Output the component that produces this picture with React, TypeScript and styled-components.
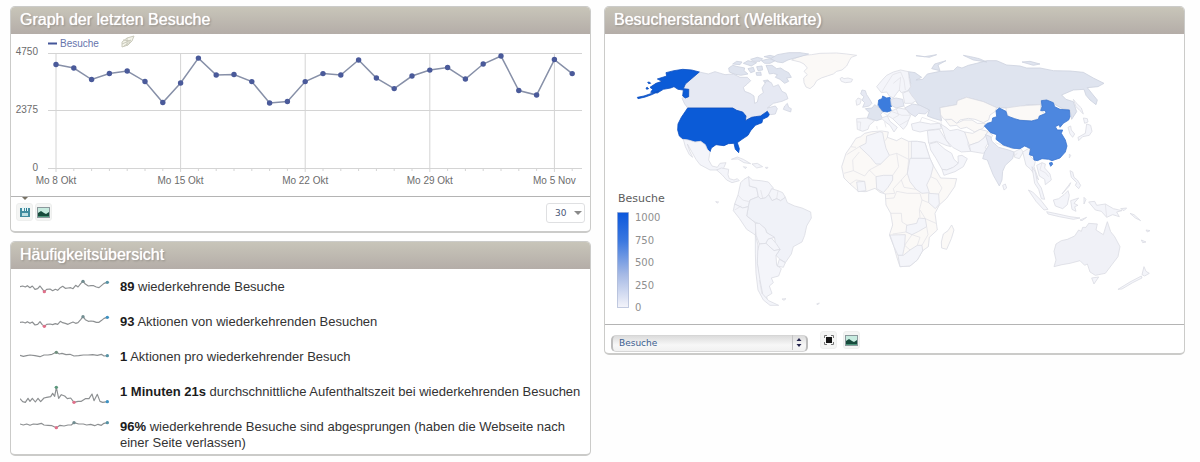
import React from "react";
import styled, { createGlobalStyle } from "styled-components";

const GlobalStyle = createGlobalStyle`
  *, *::before, *::after { box-sizing: border-box; }
  body {
    margin: 0;
    background: #fefefe;
    color: #333;
    font-family: "Liberation Sans", Arial, sans-serif;
    font-size: 13px;
    line-height: 16px;
  }
`;

const Dashboard = styled.main`
  display: grid;
  grid-template-columns: minmax(0, 1fr) minmax(0, 1fr);
  gap: 13px;
  align-items: start;
  padding: 6px 15px 8px 10px;
`;

const Column = styled.div`
  display: flex;
  flex-direction: column;
  gap: 8px;
`;

const Panel = styled.section`
  overflow: hidden;
  background: #fff;
  border: 1px solid #cbcbc9;
  border-bottom-width: 2px;
  border-radius: 5px;
`;

const PanelTitle = styled.h2`
  margin: 0;
  padding: 0 9px 2px;
  font-size: 16px;
  font-weight: 400;
  line-height: 25px;
  color: #fff;
  text-shadow: 0 0 1px #fff, 1px 1px 2px #88837b;
  background: linear-gradient(#c8c5b9, #b4ada8);
`;

const Drawing = styled.svg`
  display: block;
  width: 100%;
  height: auto;
`;

const PanelFooter = styled.footer<{ $compact?: boolean }>`
  position: relative;
  display: flex;
  align-items: flex-start;
  gap: ${(p) => (p.$compact ? "6px" : "2px")};
  padding: ${(p) => (p.$compact ? "6px 6px 2px" : "6px 5px 8px")};
  border-top: 1px solid #b4b4b4;
`;

const TabMark = styled.span`
  position: absolute;
  top: 0;
  left: 11px;
  border: 3px solid transparent;
  border-top-color: #777163;
  border-bottom: 0;
`;

const IconButton = styled.button`
  display: flex;
  align-items: center;
  justify-content: center;
  width: 17px;
  height: 18px;
  padding: 0;
  background: #f4f5f4;
  border: 1px solid #eeefee;
  border-radius: 3px;
`;

const LimitBox = styled.label`
  position: relative;
  display: block;
  width: 39px;
  height: 20px;
  margin-left: auto;
`;

const MetricBox = styled.label`
  position: relative;
  display: block;
  width: 197px;
  max-width: 60%;
  height: 17px;
  margin: 3px 6px 0 0;
`;

const LimitSelect = styled.select`
  appearance: none;
  width: 100%;
  height: 100%;
  padding: 0 8px;
  font-family: "DejaVu Sans", Verdana, sans-serif;
  font-size: 9px;
  color: #4b5878;
  background: #fff;
  border: 1px solid #dfe0e2;
  border-radius: 3px;
`;

const MetricSelect = styled.select`
  appearance: none;
  width: 100%;
  height: 100%;
  padding: 0 6px;
  font-family: "DejaVu Sans", Verdana, sans-serif;
  font-size: 9px;
  color: #3c6090;
  background: linear-gradient(#dcdcdc, #f7f7f7 60%, #f1f1f1);
  border: 1px solid #d6d6d6;
  border-width: 1px 2px;
  border-left-color: #bcbcbc;
  border-right-color: #bcbcbc;
  border-radius: 5px;
`;

const SelectMark = styled.svg`
  position: absolute;
  top: 0;
  right: 2px;
  height: 100%;
  pointer-events: none;
`;

const MetricList = styled.ul`
  margin: 0;
  padding: 10px 9px 0;
  list-style: none;
`;

const MetricRow = styled.li`
  display: flex;
  gap: 10px;
  min-height: 35px;
`;

const Sparkline = styled.svg`
  flex: none;
  width: 90px;
  height: 20px;
`;

const MetricText = styled.p`
  margin: 0;

  strong { color: #1c1c1c; }
`;

const VISITS = [
  4295, 4150, 3675, 3925, 4025, 3595, 2725, 3530, 4560, 3860, 3880, 3590, 2705, 2765, 3590,
  3920, 3860, 4480, 3735, 3300, 3820, 4065, 4170, 3695, 4315, 4645, 3220, 3035, 4500, 3920,
];
const WEEKS = ["Mo 8 Okt", "Mo 15 Okt", "Mo 22 Okt", "Mo 29 Okt", "Mo 5 Nov"];
const px = (day: number) => 45 + day * 17.8;
const py = (visits: number) => 134.5 - (visits / 4750) * 115;

function VisitsChart() {
  return (
    <Drawing viewBox="0 0 579 162" role="img" aria-label="Besuche pro Tag">
      <g fontFamily='"Liberation Sans", Arial, sans-serif' fontSize="10" fill="#6c6c6c">
        <path d="M37 9.500h9" stroke="#44569a" strokeWidth="2" />
        <text x="49" y="13" fill="#6674ac">Besuche</text>
        <path d="M111 8l5-4 7-2-2 5-4 4-6 2zM112 6l8 1M111 10l9-4M113 12l6-4M116 4v8" stroke="#cacabc" fill="#f4f4ea" />
        <text x="27" y="21" textAnchor="end">4750</text>
        <text x="27" y="79" textAnchor="end">2375</text>
        <text x="27" y="137" textAnchor="end">0</text>
        {WEEKS.map((w, i) => (
          <text key={w} x={px(i * 7)} y="150" textAnchor="middle">{w}</text>
        ))}
      </g>
      <g stroke="#d4d4d4" fill="none">
        <path d="M37 19.500H571M37 76.500H571M37 134.500H571" />
        {VISITS.map((_, i) => (
          <path key={i} d={i % 7 === 0 ? `M${px(i)} 19V138` : `M${px(i)} 134v3`} />
        ))}
      </g>
      <polyline points={VISITS.map((v, i) => `${px(i)},${py(v)}`).join(" ")} fill="none" stroke="#8790a8" strokeWidth="1.500" />
      {VISITS.map((v, i) => (
        <circle key={i} cx={px(i)} cy={py(v)} r="2.700" fill="#4a5a9a" />
      ))}
    </Drawing>
  );
}

type Dot = [number, number, string];
type Metric = { value: string; text: string; line: string; dots: Dot[] };

const METRICS: Metric[] = [
  {
    value: "89",
    text: "wiederkehrende Besuche",
    line: "0,23 8,21 16,24 22,20 30,26 37,21 45,31 53,29 60,21 66,29 73,38 80,31 90,30 98,35 106,31 113,34 121,26 128,22 136,28 144,27 152,26 159,29 167,19 174,24 182,14 189,7 196,15 205,21 213,20 221,20 229,24 237,26 245,19 252,13 262,10",
    dots: [[73, 38, "#e0708a"], [189, 7, "#718d91"], [262, 10, "#5793a5"]],
  },
  {
    value: "93",
    text: "Aktionen von wiederkehrenden Besuchen",
    line: "0,25 8,24 16,27 22,23 30,28 37,24 45,33 53,31 60,23 66,31 73,37 80,31 90,30 98,32 106,29 113,31 121,22 128,26 136,28 144,31 152,27 159,24 167,28 174,26 182,17 189,8 196,17 205,22 213,21 221,22 229,25 237,25 245,19 252,13 262,10",
    dots: [[73, 37, "#e0708a"], [189, 8, "#718d91"], [262, 10, "#3d91c2"]],
  },
  {
    value: "1",
    text: "Aktionen pro wiederkehrender Besuch",
    line: "0,19 10,22 20,20 30,18 45,20 60,23 72,18 84,18 96,16 109,10 118,15 126,13 138,17 150,16 162,21 176,20 190,18 204,18 218,17 232,19 244,16 252,21 262,20",
    dots: [[109, 10, "#708f7e"], [262, 20, "#5793a5"]],
  },
  {
    value: "1 Minuten 21s",
    text: "durchschnittliche Aufenthaltszeit bei wiederkehrenden Besuchen",
    line: "0,44 8,53 16,55 24,43 30,52 37,43 46,54 54,43 62,53 72,42 80,40 92,38 98,28 104,37 109,10 116,43 124,32 134,36 142,44 152,42 162,55 174,52 184,52 196,44 207,44 216,30 222,50 232,31 240,52 248,55 262,53",
    dots: [[109, 10, "#5c987d"], [162, 55, "#e0708a"], [262, 53, "#3d91c2"]],
  },
  {
    value: "96%",
    text: "wiederkehrende Besuche sind abgesprungen (haben die Webseite nach einer Seite verlassen)",
    line: "0,15 10,18 20,15 30,19 40,15 52,16 64,13 72,18 84,19 96,20 109,26 120,19 132,21 144,18 154,18 162,11 176,15 190,15 200,18 212,16 224,20 234,16 244,19 252,13 262,11",
    dots: [[109, 26, "#e0708a"], [162, 11, "#718d91"], [262, 11, "#5793a5"]],
  },
];

const NONE = "#fbf9f7";
const LOW = "#f4f5fa";
const MID = "#e6e9f3";
const HIGH = "#dfe4ef";
const USA = "#0b5bd7";
const CHINA = "#4d87df";
const GERMANY = "#3c7cdd";

const OUTLINES: Record<string, string> = {
  [USA]: "#0c4fc0",
  [CHINA]: "#3c76cf",
  [GERMANY]: "#3c76cf",
  [HIGH]: "#cdd2de",
  [MID]: "#d2d6e1",
};

type Shape = [string, string];
type Region = { x: number; y: number; shapes: Shape[]; borders?: string };

const REGIONS: Region[] = [
  {
    x: 720, y: 40,
    shapes: [
      [NONE, "M215 60L232 52 250 46 275 44 300 40 350 39 380 42 410 46 394 52 388 62 380 78 366 90 350 94 340 102 322 108 304 114 290 122 282 136 270 146 258 141 252 128 251 114 262 104 252 94 262 84 252 72 240 66Z"],
      [LOW, "M360 116L366 112 372 116 384 114 398 118 394 126 376 128 364 124Z"],
      [HIGH, "M26 84L38 76 54 80 74 84 72 92 84 102 62 106 42 102 28 96Z"],
      [HIGH, "M38 72L50 64 66 66 60 74ZM70 70L84 62 110 68 94 78ZM84 86L100 82 104 94 92 98ZM110 80L126 78 128 90 114 92Z"],
      [HIGH, "M92 58L112 52 128 56 120 64 100 64ZM124 62L148 56 166 62 150 70 134 70ZM132 50L150 46 166 50 158 56Z"],
      [HIGH, "M152 56L172 44 206 38 240 38 266 42 240 50 224 54 204 60 188 68 172 66Z"],
      [HIGH, "M138 76L156 76 170 86 182 84 194 92 206 98 214 112 200 114 206 124 194 130 180 118 166 112 172 104 160 100 148 102 144 90Z"],
      [HIGH, "M130 122L144 120 150 128 138 132ZM108 98L122 96 124 106 110 106Z"],
    ],
  },
  {
    x: 600, y: 0,
    shapes: [
      [MID, "M298 216L325 222 345 215 375 224 400 222 420 232 442 232 452 242 442 252 430 262 434 274 450 280 462 288 464 310 472 306 476 288 490 278 486 264 500 242 514 248 520 260 535 254 546 274 558 280 564 296 546 304 520 310 502 324 526 318 532 326 526 342 512 344 502 334 478 350 455 352 436 362 438 348 410 331 398 324 263 324 254 312 246 295 252 290 264 292 268 268 250 268 256 252Z"],
      [MID, "M554 318L562 310 566 322 574 326 572 336 550 328Z"],
      [USA, "M298 216L275 210 248 208 222 212 198 218 200 228 172 237 186 244 168 250 150 262 158 268 152 277 172 279 190 268 212 264 222 260 234 268 250 270 248 288 256 294 266 290 266 268 250 266 256 252Z"],
      [USA, "M112 292L132 288 152 281 176 273 158 283 136 291 114 296ZM143 247L148 246 152 250 146 251ZM138 264L142 262 146 266 140 268Z"],
      [USA, "M263 324L398 324 410 331 428 336 438 348 436 362 455 352 466 350 482 348 496 338 502 334 508 344 504 350 488 358 486 368 466 376 452 392 444 406 426 418 412 428 418 446 416 458 406 448 402 430 385 431 372 437 348 434 334 444 330 456 322 448 316 434 302 424 285 426 265 420 250 418 238 408 233 390 234 372 244 352Z"],
      [LOW, "M250 418L265 420 285 426 302 424 316 434 322 448 330 456 326 480 336 498 352 502 360 490 378 488 372 502 364 512 350 510 330 510 300 494 288 478 275 455 262 432 270 455 278 472 268 464 256 440Z"],
      [LOW, "M350 510L364 504 386 508 384 524 388 536 402 540 412 536 418 542 396 548 380 540 366 524Z"],
      [LOW, "M394 478L412 471 430 478 452 491 432 488 414 477ZM456 492L472 490 488 500 470 504ZM430 500L440 502 436 506ZM496 502L504 502 500 507Z"],
    ],
  },
  {
    x: 600, y: 180,
    shapes: [
      [LOW, "M422 8L432 -2 446 -10 450 2 448 18 470 24 475 50 450 60 445 80 428 84 404 72 414 45Z"],
      [LOW, "M446 -10L458 0 482 2 505 6 520 24 512 40 496 54 482 56 475 50 470 24 448 18Z"],
      [LOW, "M515 26L534 32 548 38 556 52 542 62 530 56 516 62 506 44Z"],
      ["#f0f2f8", "M445 80L450 60 475 50 482 56 496 54 506 44 516 62 530 56 542 62 556 52 562 68 584 78 606 84 632 96 634 114 620 138 614 166 606 186 580 200 574 222 556 248 538 236 528 226 540 208 526 192 524 174 500 158 496 146 478 132 462 125 440 108Z"],
      [LOW, "M404 72L428 84 445 80 440 108 462 125 470 135 466 165 440 148 418 115 400 92Z"],
      [LOW, "M466 130L478 130 496 146 500 158 524 172 504 178 498 190 478 192 468 165Z"],
      [LOW, "M498 190L504 178 514 174 528 190 540 208 522 212Z"],
      [LOW, "M478 192L498 190 522 212 540 208 528 226 530 256 544 266 536 288 514 294 520 308 508 318 516 340 500 350 502 362 486 342 478 300 472 250 472 215Z"],
      [LOW, "M538 238L556 248 550 262 532 258Z"],
      [LOW, "M466 165L474 195 472 250 480 300 488 342 506 362 536 376 510 376 490 360 474 330 468 280 466 220Z"],
      [LOW, "M347 65L356 66 352 69ZM546 357L558 356 552 361ZM650 372L658 369 654 374Z"],
    ],
    borders: "M414 45L428 60 450 66M482 30L488 54M534 32L530 56M478 300L486 342M404 90L424 78",
  },
  {
    x: 830, y: 130,
    shapes: [
      [NONE, "M78 25L92 20 104 10 125 5 155 3 175 6 172 22 200 32 214 24 236 34 262 34 285 38 290 55 300 85 312 110 332 144 380 146 374 170 350 205 328 225 315 250 322 300 298 322 295 350 278 362 262 390 240 408 210 410 200 380 192 350 178 315 188 285 182 250 168 225 166 192 150 187 135 175 108 185 85 184 60 162 42 144 35 110 48 70 62 50Z"],
      [LOW, "M88 50L108 40 110 18 150 5 158 8 162 30 168 55 178 76 152 102 138 102 120 80Z"],
      [LOW, "M244 34L262 34 285 38 290 55 300 85 244 85Z"],
      [LOW, "M240 85L300 85 310 108 302 140 290 165 298 188 276 190 258 178 240 155 232 130Z"],
      [LOW, "M138 140L160 136 188 136 188 150 174 172 160 188 140 176Z"],
      [LOW, "M80 156L104 154 108 182 84 185Z"],
      [LOW, "M296 190L326 192 328 222 316 236 296 218Z"],
      [LOW, "M230 286L260 280 266 264 286 266 290 290 266 304 246 314 228 306Z"],
      [LOW, "M180 315L226 314 224 346 218 376 204 376 192 350Z"],
      [LOW, "M204 376L220 376 240 360 262 346 276 346 278 362 262 390 240 408 210 410Z"],
      [NONE, "M365 285L372 300 364 326 350 358 335 354 334 336 340 312 354 302Z"],
      [LOW, "M298 42L320 36 345 58 365 70 372 88 385 100 370 112 350 120 336 118 318 85 302 60Z"],
      [LOW, "M336 118L350 120 370 112 385 100 384 78 396 76 412 86 400 110 375 125 342 136Z"],
    ],
    borders: "M50 74L72 60 88 50M62 50L78 52M42 130L70 122 68 90 88 66M70 122L104 138 118 120 152 102M178 76L200 70 236 88M236 34V88L232 130 214 150 190 176 194 190 166 192M172 22L166 32M188 136L206 110 200 70M118 120L138 140M60 162L78 150 104 154M214 150L222 172 258 178M166 206L192 204 200 184 232 190 270 190 276 210 268 240 270 262M182 250L214 250 216 276 232 286M188 312L228 306M302 140L320 148 336 174 326 192M276 210L296 218M270 240L286 266 318 280M290 290L294 314 276 346M224 346L246 314 270 322 262 346M224 346L240 360",
  },
  {
    x: 840, y: 40,
    shapes: [
      [HIGH, "M205 95L225 98 245 112 228 120 248 118 262 102 300 94 340 92 352 80 366 84 385 76 410 70 440 62 470 62 500 75 540 78 560 84 600 84 640 92 690 93 730 97 760 114 792 130 774 140 742 143 762 168 772 180 768 194 750 180 738 166 732 148 700 150 665 165 678 178 700 185 710 215 695 238 690 210 665 205 630 185 605 180 602 194 560 195 520 205 470 203 430 185 380 172 352 182 350 194 300 203 302 225 305 242 280 235 262 228 268 210 235 195 225 180 200 165 212 130Z"],
      [HIGH, "M275 86L284 72 318 62 294 75 300 92ZM370 46L392 50 418 56 440 66 400 60ZM546 66L570 64 600 72 580 76ZM228 47L254 50 290 44 268 52Z"],
      [NONE, "M300 203L350 194 352 182 380 172 430 185 470 203 465 215 450 225 446 240 430 248 405 238 385 235 360 240 350 250 334 238 312 238 302 225Z"],
      [NONE, "M316 240L334 238 350 250 372 240 396 240 412 250 436 250 430 264 404 276 380 262 362 266 350 256 330 258Z"],
      [LOW, "M110 140L125 122 140 106 160 96 182 90 205 95 208 120 212 140 204 152 184 158 178 150 170 160 160 174 148 168 140 156 124 158Z"],
      [MID, "M66 150L76 152 80 164 88 176 96 190 88 198 68 202 74 188 66 180 72 170 62 162Z"],
      [LOW, "M48 182L54 174 64 178 60 192 50 196Z"],
      [HIGH, "M76 206L96 204 104 194 118 204 128 216 122 224 128 236 110 242 82 234 88 218Z"],
      [LOW, "M50 236L80 234 104 242 88 256 84 268 68 274 52 268Z"],
      [GERMANY, "M116 180L126 176 128 168 140 174 150 172 154 186 156 198 150 202 154 212 142 216 128 214 122 206 114 196Z"],
      [MID, "M152 178L168 174 188 178 192 198 168 204 154 196Z"],
      [MID, "M194 204L218 192 240 196 268 210 256 222 236 220 226 230 212 222Z"],
      [LOW, "M156 212L176 204 198 208 212 226 206 240 200 256 190 268 178 256 158 236 142 226Z"],
      [LOW, "M124 234L142 228 150 244 172 262 162 276 150 256 136 246Z"],
      [LOW, "M214 252L240 246 272 252 300 250 304 266 266 270 240 276 218 270Z"],
      [LOW, "M302 252L318 262 330 272 352 268 374 276 386 296 384 314 392 334 364 336 338 322 318 300Z"],
      [LOW, "M262 272L298 268 318 300 332 320 318 316 290 304 266 310Z"],
      [NONE, "M374 276L398 280 420 268 444 274 432 294 416 306 388 316Z"],
      [LOW, "M388 316L416 306 432 294 444 274 458 286 444 310 436 322 444 336 428 340 392 334Z"],
      [LOW, "M188 160L206 152 216 168 228 182 216 190 194 190Z"],
    ],
    borders: "M124 158L140 132 158 104 182 96M160 130L182 112 178 150M182 96L192 120 196 150M154 214L186 226 212 226M168 204L176 226 158 236M192 198L198 208M52 246L62 246 60 270M128 216L142 226M304 252L300 225 M240 246L246 232 300 250M104 202L116 198M178 256L206 240M112 268L110 258M138 262L134 246",
  },
  {
    x: 930, y: 110,
    shapes: [
      [MID, "M166 74L182 80 186 94 206 112 236 120 252 126 248 146 226 166 218 184 216 210 208 228 190 196 178 166 172 150 158 146 164 126 176 106Z"],
      [LOW, "M252 126L272 116 280 126 268 146 254 142Z"],
      [LOW, "M278 126L298 114 302 140 316 154 312 170 326 210 316 196 300 176 288 166Z"],
      [LOW, "M218 226L226 222 230 234 222 240Z"],
    ],
    borders: "M196 98L216 106 248 116M250 140L262 130",
  },
  {
    x: 970, y: 40,
    shapes: [
      [NONE, "M108 204L150 198 212 194 212 210 225 222 205 235 185 243 150 240 120 235 110 218Z"],
      [CHINA, "M43 258L52 250 66 246 68 234 80 230 78 212 88 204 108 214 112 228 134 236 150 241 185 243 205 238 208 228 228 220 226 212 212 212 216 200 214 182 230 180 250 188 254 200 270 208 298 210 300 230 296 240 280 250 270 262 268 254 256 260 262 270 278 270 274 280 286 300 291 318 286 336 270 354 246 362 236 358 216 356 202 362 192 360 190 348 178 344 182 326 164 318 150 326 130 325 100 315 78 298 80 284 62 278Z"],
      [CHINA, "M238 369L246 367 248 373 242 379Z"],
      [LOW, "M294 262L302 258 304 270 314 282 308 292 300 282Z"],
      [LOW, "M340 234L352 236 354 246 344 250ZM350 252L362 256 366 274 358 286 338 290 326 302 324 292 346 280Z"],
      [LOW, "M310 178L318 188 334 204 340 222 330 212 318 200ZM298 342L302 346 298 354Z"],
    ],
  },
  {
    x: 980, y: 140,
    shapes: [
      ["#f0f1f7", "M228 312L244 302 262 298 284 288 296 270 304 274 308 262 318 262 326 250 352 252 348 270 370 284 376 264 382 245 392 275 404 290 420 320 414 350 395 375 376 400 346 406 330 396 322 372 314 376 300 362 270 370 246 374 222 380 228 360 222 334Z"],
      [LOW, "M335 414L356 411 342 432ZM492 380L498 394 508 400 494 408 486 404ZM484 408L486 414 458 428 426 447 414 448 450 426Z"],
      [LOW, "M326 186L344 184 350 196 376 192 400 206 426 212 410 216 418 230 398 224 380 232 364 214 346 210Z"],
      [LOW, "M220 180L236 176 252 164 264 152 268 166 262 194 248 206 226 198Z"],
      [LOW, "M272 182L296 174 282 190 294 196 284 200 288 214 276 208ZM312 172L318 178 312 192Z"],
      [LOW, "M145 150L158 156 182 180 204 208 192 210 168 184ZM200 215L234 222 270 230 300 234 280 238 238 230 204 222Z"],
      [LOW, "M270 92L278 96 282 112 292 120 302 136 296 146 286 136 290 128 274 112ZM246 162L272 128 268 138Z"],
      [LOW, "M156 80L166 96 172 126 184 144 194 178 184 176 176 148 164 130Z"],
      [LOW, "M170 76L186 68 196 72 194 84 210 102 214 120 196 134 194 118 178 108Z"],
      [LOW, "M422 206L440 204 432 212ZM450 220L462 224 482 242 466 234ZM498 270L510 272 502 276ZM484 300L498 306 488 308ZM300 240L320 232 306 242Z"],
    ],
    borders: "M186 68L180 90 196 98 206 110M376 192L380 232",
  },
];

function WorldMap() {
  return (
    <Drawing viewBox="605 34 579 290" role="img" aria-label="Weltkarte der Besuche">
      <defs>
        <linearGradient id="scale" x1="0" y1="0" x2="0" y2="1">
          <stop offset="0" stopColor="#0b57dc" />
          <stop offset="0.3" stopColor="#3b78e0" />
          <stop offset="0.65" stopColor="#a5b9e5" />
          <stop offset="1" stopColor="#f4f4fa" />
        </linearGradient>
      </defs>
      {REGIONS.map((r, i) => (
        <g key={i} transform={`translate(${r.x} ${r.y}) scale(0.33333)`} strokeLinejoin="round">
          {r.shapes.map(([fill, d], j) => (
            <path key={j} d={d} fill={fill} stroke={OUTLINES[fill] ?? "#dadce3"} strokeWidth="2.400" />
          ))}
          {r.borders && <path d={r.borders} fill="none" stroke="#e0e0e5" strokeWidth="2" />}
        </g>
      ))}
      <g fontFamily='"DejaVu Sans", Verdana, sans-serif' fontSize="10" fill="#8f8f8f">
        <text x="618" y="202" fontSize="11" fill="#5c5c5c">Besuche</text>
        <rect x="617.500" y="212.500" width="11" height="95" fill="url(#scale)" stroke="#8b9cc4" strokeOpacity="0.5" />
        {[1000, 750, 500, 250, 0].map((n, i) => (
          <text key={n} x="635" y={221 + i * 22.5}>{n}</text>
        ))}
      </g>
    </Drawing>
  );
}

const PictureIcon = () => (
  <svg width="13" height="11" viewBox="0 0 13 11">
    <rect x="0.5" y="0.5" width="12" height="10" fill="#c6ebdf" stroke="#8b989c" />
    <path d="M1 6l3-2 3 2 2 1 3-2v4H1z" fill="#164b3c" />
    <path d="M1 9h11v1H1z" fill="#4a9479" />
  </svg>
);

const SaveIcon = () => (
  <svg width="10" height="10" viewBox="0 0 10 10">
    <path d="M0 1h10v9H0z" fill="#428ca0" />
    <path d="M2 0h2v4H2zM5 0h3v4H5z" fill="#e5f5f6" />
    <path d="M6 1h1v3H6z" fill="#2a7890" />
    <path d="M2 6h6v3H2z" fill="#bfdfe3" />
  </svg>
);

const ExpandIcon = () => (
  <svg width="10" height="10" viewBox="0 0 10 10">
    <path d="M2 2h6v6H2z" fill="#151515" />
    <path d="M.5 3V.5H3M7 .5h2.500V3M9.500 7v2.500H7M3 9.500H.5V7" fill="none" stroke="#777" />
  </svg>
);

export default function App() {
  return (
    <>
      <GlobalStyle />
      <Dashboard>
        <Column>
          <Panel>
            <PanelTitle>Graph der letzten Besuche</PanelTitle>
            <VisitsChart />
            <PanelFooter>
              <TabMark />
              <IconButton aria-label="Daten exportieren"><SaveIcon /></IconButton>
              <IconButton aria-label="Als Bild anzeigen"><PictureIcon /></IconButton>
              <LimitBox>
                <LimitSelect aria-label="Anzahl Tage" defaultValue="30">
                  <option>30</option>
                </LimitSelect>
                <SelectMark width="10" viewBox="0 0 10 20">
                  <path d="M1 8h8l-4 4z" fill="#8a8a8a" />
                </SelectMark>
              </LimitBox>
            </PanelFooter>
          </Panel>
          <Panel>
            <PanelTitle>Häufigkeitsübersicht</PanelTitle>
            <MetricList>
              {METRICS.map((m) => (
                <MetricRow key={m.text}>
                  <Sparkline viewBox="0 0 270 60" aria-hidden="true">
                    <polyline points={m.line} fill="none" stroke="#8d9092" strokeWidth="3.500" strokeLinejoin="round" />
                    {m.dots.map(([x, y, color]) => (
                      <circle key={x} cx={x} cy={y} r="5" fill={color} />
                    ))}
                  </Sparkline>
                  <MetricText>
                    <strong>{m.value}</strong> {m.text}
                  </MetricText>
                </MetricRow>
              ))}
            </MetricList>
          </Panel>
        </Column>
        <Panel>
          <PanelTitle>Besucherstandort (Weltkarte)</PanelTitle>
          <WorldMap />
          <PanelFooter $compact>
            <MetricBox>
              <MetricSelect aria-label="Messwert" defaultValue="Besuche">
                <option>Besuche</option>
              </MetricSelect>
              <SelectMark width="14" viewBox="0 0 14 17">
                <path d="M.5 1v15" stroke="#c4c4c4" />
                <path d="M4.500 7L7 4l2.500 3zM4.500 10L7 13l2.500-3z" fill="#26264e" />
              </SelectMark>
            </MetricBox>
            <IconButton aria-label="Vergrößern"><ExpandIcon /></IconButton>
            <IconButton aria-label="Als Bild anzeigen"><PictureIcon /></IconButton>
          </PanelFooter>
        </Panel>
      </Dashboard>
    </>
  );
}
